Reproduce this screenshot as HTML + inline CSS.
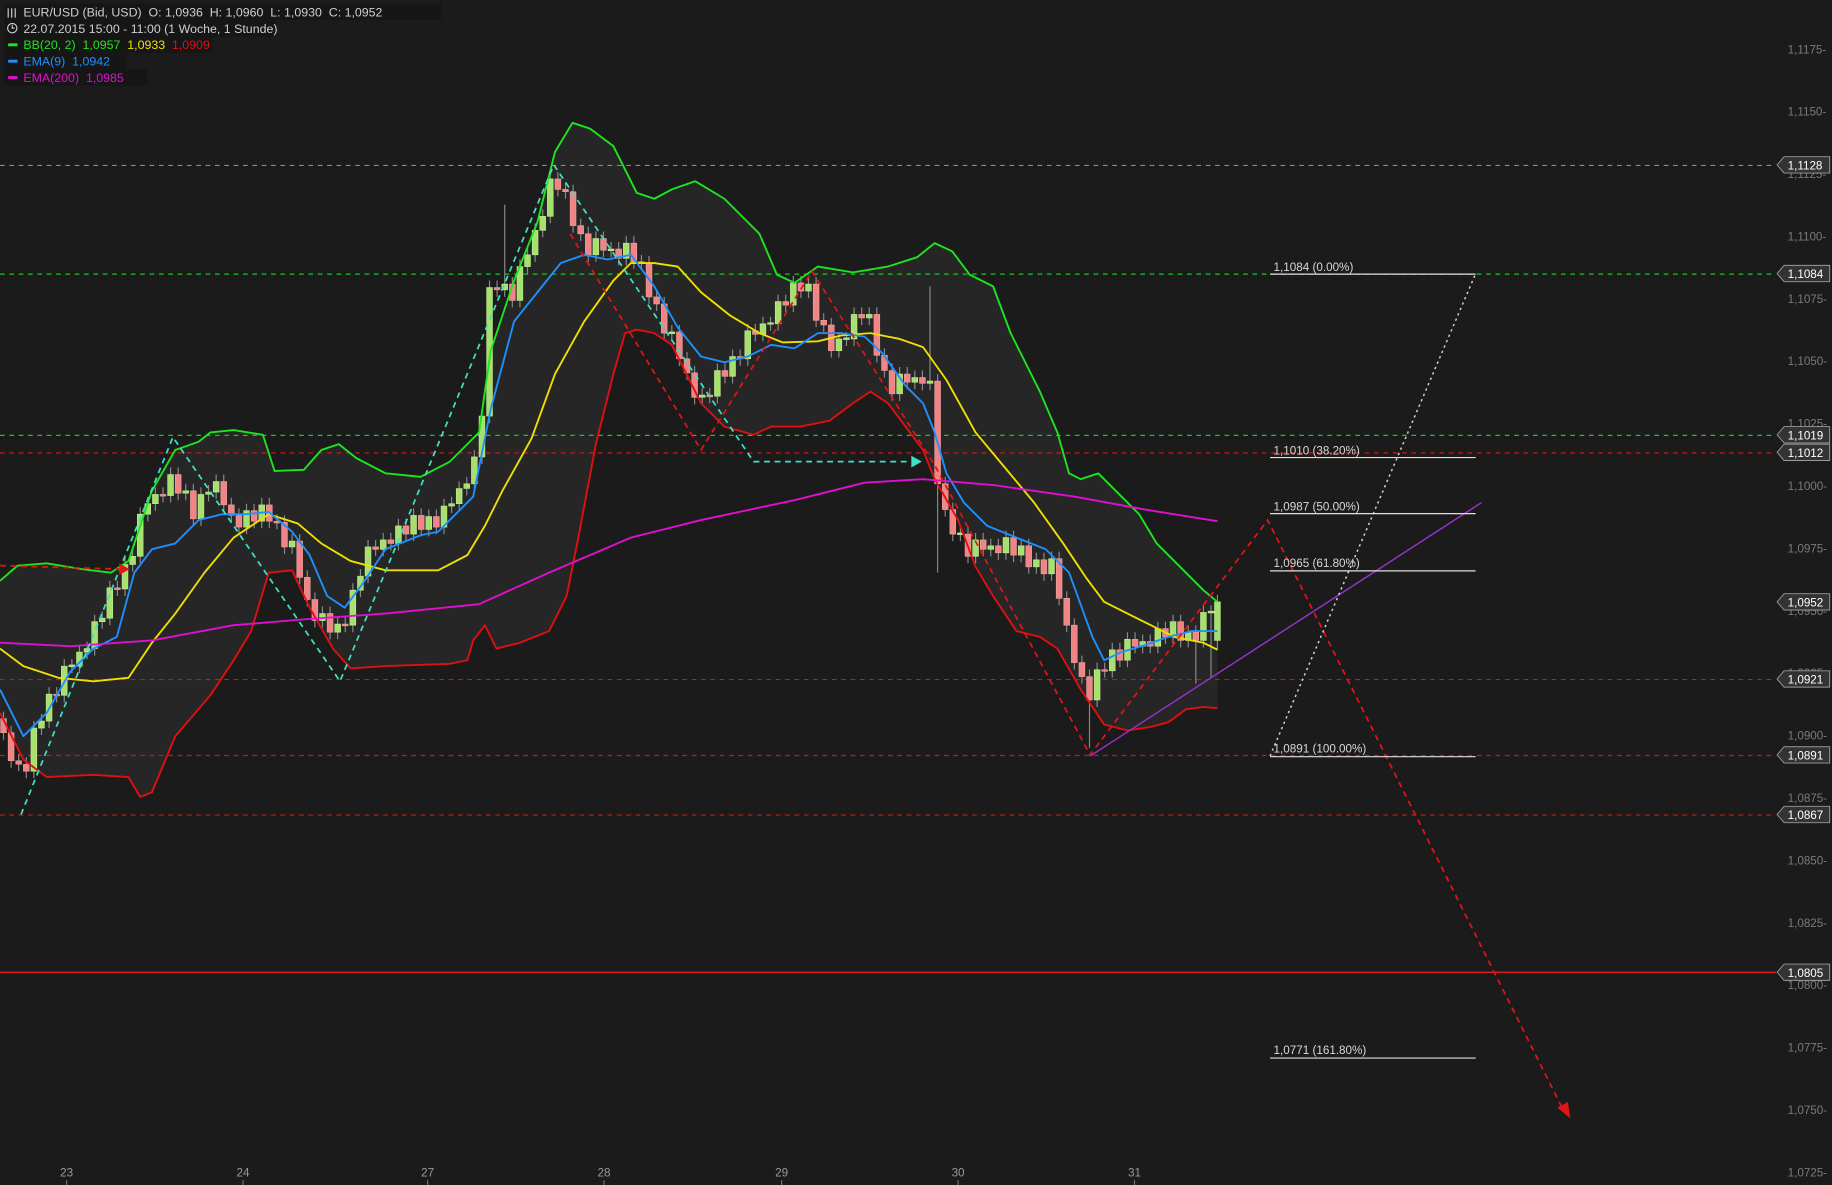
<!DOCTYPE html>
<html><head><meta charset="utf-8">
<style>
html,body{margin:0;padding:0;background:#1c1b1b;overflow:hidden}
svg{display:block}
text{font-family:"Liberation Sans",sans-serif;white-space:pre}
</style></head>
<body>
<svg width="1832" height="1185" viewBox="0 0 1568 1014" xmlns="http://www.w3.org/2000/svg">
<rect width="1568" height="1014" fill="#1c1b1b"/>
<polygon fill="#262626" points="0,497 15,484 40,482 70,487 95,490 110,480 130,420 150,385 170,378 180,370 200,368 225,372 235,403 260,402 275,385 290,380 305,392 330,405 360,408 385,395 410,370 420,300 440,240 460,190 475,130 490,105 505,110 525,125 545,165 560,170 575,162 595,155 620,170 650,200 665,235 680,242 700,228 730,233 760,228 785,220 800,208 815,215 830,235 850,245 865,285 890,335 905,370 915,405 925,410 940,405 960,425 975,440 990,465 1010,485 1030,505 1042,515 1042,606 1030,605 1015,607 1000,618 985,622 965,625 945,620 925,590 905,555 890,545 870,540 850,510 835,485 820,445 800,410 790,385 775,365 760,345 745,335 730,345 710,360 685,365 660,365 645,372 620,365 600,345 575,295 560,285 545,282 535,285 525,320 510,380 495,460 485,510 470,540 445,550 425,555 415,535 405,548 400,565 385,568 330,570 300,572 285,555 265,520 250,488 230,490 215,540 200,565 180,595 150,630 130,678 120,682 110,665 80,663 40,665 20,650 0,610"/>
<g stroke-width="1" fill="none">
<line x1="0" y1="141.5" x2="1520" y2="141.5" stroke="#8a8a8a" stroke-dasharray="4,4"/>
<line x1="0" y1="234.5" x2="1520" y2="234.5" stroke="#19c819" stroke-dasharray="4,4"/>
<line x1="0" y1="372.5" x2="1520" y2="372.5" stroke="#19c819" stroke-dasharray="4,4"/>
<line x1="0" y1="387.5" x2="1520" y2="387.5" stroke="#c81919" stroke-dasharray="4,4"/>
<line x1="0" y1="581.5" x2="1520" y2="581.5" stroke="#c81919" stroke-dasharray="4,4"/>
<line x1="0" y1="646.5" x2="1520" y2="646.5" stroke="#c81919" stroke-dasharray="4,4"/>
<line x1="0" y1="697.5" x2="1520" y2="697.5" stroke="#c81919" stroke-dasharray="4,4"/>
<line x1="0" y1="832" x2="1520" y2="832" stroke="#e01515" stroke-width="1.3"/>
</g>
<!-- wicks -->
<path stroke="#8a8a8a" stroke-width="1" fill="none" d="M3 609V633M9.5 621V657M16 645V660M22.5 648V666M29 617V666M35.5 611V629M42 588V623M48.5 588V601M55 564V601M61.5 564V576M68 552V576M74.5 549V564M81 526V561M87.5 523V538M94 497V535M100.5 497V510M107 477V510M113.5 470V489M120 434V482M126.5 425V446M133 417V437M139.5 417V430M146 400V430M152.5 400V428M159 414V428M165.5 414V450M172 417V450M178.5 415V429M185 406V427M191.5 406V438M198 426V447M204.5 435V457M211 431V457M217.5 431V452M224 426V452M230.5 426V452M237 440V453M243.5 441V474M250 457V474M256.5 457V500M263 488V519M269.5 507V537M276 519V537M282.5 519V547M289 528V547M295.5 528V541M302 499V541M308.5 487V511M315 462V499M321.5 462V476M328 456V476M334.5 456V471M341 444V471M347.5 444V463M354 435V463M360.5 435V459M367 436V459M373.5 436V457M380 427V457M386.5 425V439M393 412V437M399.5 408V424M406 385V420M412.5 350V397M419 240V362M425.5 240V254M432 175V254M438.5 237V263M445 222V263M451.5 212V234M458 191V224M464.5 179V203M471 147V191M477.5 147V168M484 156V170M490.5 158V199M497 187V206M503.5 194V224M510 198V224M516.5 198V220M523 207V220M529.5 207V227M536 202V227M542.5 202V230M549 218V231M555.5 219V260M562 248V266M568.5 254V291M575 278V291M581.5 278V313M588 301V325M594.5 313V346M601 332V346M607.5 332V345M614 311V345M620.5 311V328M627 299V328M633.5 299V313M640 277V313M646.5 277V292M653 271V292M659.5 271V283M666 252V283M672.5 252V267M679 236V267M685.5 236V255M692 237V255M698.5 237V280M705 268V284M711.5 272V306M718 284V306M724.5 284V296M731 263V296M737.5 263V278M744 263V278M750.5 263V310M757 298V323M763.5 311V343M770 314V343M776.5 314V333M783 317V333M789.5 317V334M796 245V334M802.5 320V490M809 408V442M815.5 430V463M822 451V463M828.5 451V482M835 456V482M841.5 456V476M848 461V476M854.5 461V479M861 454V479M867.5 454V481M874 461V481M880.5 461V491M887 473V491M893.5 473V497M900 472V497M906.5 472V518M913 506V541M919.5 529V573M926 561V585M932.5 573V640M939 567V605M945.5 567V580M952 550V580M958.5 550V571M965 541V571M971.5 541V559M978 543V559M984.5 543V559M991 532V559M997.5 532V551M1004 526V551M1010.5 526V554M1017 535V554M1023.5 535V585M1030 518V554M1036.5 518V580M1042 509V556"/>
<!-- bear bodies -->
<path fill="#f08585" stroke="#f4a0a0" stroke-width="0.5" d="M0.5 615h5v12h-5zM7 627h5v24h-5zM13.5 651h5v3h-5zM20 654h5v6h-5zM46 594h5v1.5h-5zM98 503h5v1.5h-5zM137 423h5v1.5h-5zM150 406h5v16h-5zM163 420h5v24h-5zM189 412h5v20h-5zM195.5 432h5v9h-5zM202 441h5v10h-5zM215 437h5v9h-5zM228 432h5v14h-5zM234.5 446h5v1.5h-5zM241 447h5v21h-5zM254 463h5v31h-5zM260.5 494h5v19h-5zM267 513h5v18h-5zM280 525h5v16h-5zM293 534h5v1.5h-5zM319 468h5v2h-5zM332 462h5v3h-5zM345 450h5v7h-5zM358 441h5v12h-5zM371 442h5v9h-5zM423 246h5v2h-5zM436 243h5v14h-5zM475 153h5v9h-5zM481.5 162h5v2h-5zM488 164h5v29h-5zM494.5 193h5v7h-5zM501 200h5v18h-5zM514 204h5v10h-5zM527 213h5v8h-5zM540 208h5v16h-5zM546.5 224h5v1.5h-5zM553 225h5v29h-5zM559.5 254h5v6h-5zM566 260h5v25h-5zM579 284h5v23h-5zM585.5 307h5v12h-5zM592 319h5v21h-5zM605 338h5v1.5h-5zM618 317h5v5h-5zM631 305h5v2h-5zM644 283h5v3h-5zM670 258h5v3h-5zM683 242h5v7h-5zM696 243h5v31h-5zM702.5 274h5v4h-5zM709 278h5v22h-5zM735 269h5v3h-5zM748 269h5v35h-5zM754.5 304h5v13h-5zM761 317h5v20h-5zM774 320h5v7h-5zM787 323h5v5h-5zM800 326h5v88h-5zM806.5 414h5v22h-5zM813 436h5v21h-5zM826 457h5v19h-5zM839 462h5v8h-5zM852 467h5v6h-5zM865 460h5v15h-5zM878 467h5v18h-5zM891 479h5v12h-5zM904 478h5v34h-5zM910.5 512h5v23h-5zM917 535h5v32h-5zM923.5 567h5v12h-5zM930 579h5v20h-5zM943 573h5v1.5h-5zM956 556h5v9h-5zM969 547h5v6h-5zM982 549h5v4h-5zM995 538h5v7h-5zM1008 532h5v16h-5zM1021 541h5v7h-5z"/>
<!-- bull bodies -->
<path fill="#a8e070" stroke="#c0f090" stroke-width="0.5" d="M26.5 623h5v37h-5zM33 617h5v6h-5zM39.5 594h5v23h-5zM52.5 570h5v25h-5zM59 569h5v1.5h-5zM65.5 558h5v12h-5zM72 555h5v3h-5zM78.5 532h5v23h-5zM85 529h5v3h-5zM91.5 503h5v26h-5zM104.5 483h5v21h-5zM111 476h5v7h-5zM117.5 440h5v36h-5zM124 431h5v9h-5zM130.5 423h5v8h-5zM143.5 406h5v18h-5zM156.5 420h5v2h-5zM169.5 423h5v21h-5zM176 421h5v2h-5zM182.5 412h5v9h-5zM208.5 437h5v14h-5zM221.5 432h5v14h-5zM247.5 463h5v5h-5zM273.5 525h5v6h-5zM286.5 534h5v7h-5zM299.5 505h5v30h-5zM306 493h5v12h-5zM312.5 468h5v25h-5zM325.5 462h5v8h-5zM338.5 450h5v15h-5zM351.5 441h5v16h-5zM364.5 442h5v11h-5zM377.5 433h5v18h-5zM384 431h5v2h-5zM390.5 418h5v13h-5zM397 414h5v4h-5zM403.5 391h5v23h-5zM410 356h5v35h-5zM416.5 246h5v110h-5zM429.5 243h5v5h-5zM442.5 228h5v29h-5zM449 218h5v10h-5zM455.5 197h5v21h-5zM462 185h5v12h-5zM468.5 153h5v32h-5zM507.5 204h5v14h-5zM520.5 213h5v1.5h-5zM533.5 208h5v13h-5zM572.5 284h5v1.5h-5zM598.5 338h5v2h-5zM611.5 317h5v22h-5zM624.5 305h5v17h-5zM637.5 283h5v24h-5zM650.5 277h5v9h-5zM657 276h5v1.5h-5zM663.5 258h5v19h-5zM676.5 242h5v19h-5zM689.5 243h5v6h-5zM715.5 290h5v10h-5zM722 289h5v1.5h-5zM728.5 269h5v21h-5zM741.5 269h5v3h-5zM767.5 320h5v17h-5zM780.5 323h5v4h-5zM793.5 326h5v2h-5zM819.5 456h5v1.5h-5zM832.5 462h5v14h-5zM845.5 467h5v3h-5zM858.5 460h5v13h-5zM871.5 467h5v8h-5zM884.5 479h5v6h-5zM897.5 478h5v13h-5zM936.5 573h5v26h-5zM949.5 556h5v18h-5zM962.5 547h5v18h-5zM975.5 549h5v4h-5zM988.5 538h5v15h-5zM1001.5 532h5v13h-5zM1014.5 541h5v7h-5zM1027.5 524h5v24h-5zM1034 523h5v1.5h-5zM1039.5 515h5v33h-5z"/>
<g fill="none" stroke-width="1.6" stroke-linejoin="round">
<polyline stroke="#1ee61e" points="0,497 15,484 40,482 70,487 95,490 110,480 130,420 150,385 170,378 180,370 200,368 225,372 235,403 260,402 275,385 290,380 305,392 330,405 360,408 385,395 410,370 420,300 440,240 460,190 475,130 490,105 505,110 525,125 545,165 560,170 575,162 595,155 620,170 650,200 665,235 680,242 700,228 730,233 760,228 785,220 800,208 815,215 830,235 850,245 865,285 890,335 905,370 915,405 925,410 940,405 960,425 975,440 990,465 1010,485 1030,505 1042,515"/>
<polyline stroke="#e01010" points="0,610 20,650 40,665 80,663 110,665 120,682 130,678 150,630 180,595 200,565 215,540 230,490 250,488 265,520 285,555 300,572 330,570 385,568 400,565 405,548 415,535 425,555 445,550 470,540 485,510 495,460 510,380 525,320 535,285 545,282 560,285 575,295 600,345 620,365 645,372 660,365 685,365 710,360 730,345 745,335 760,345 775,365 790,385 800,410 820,445 835,485 850,510 870,540 890,545 905,555 925,590 945,620 965,625 985,622 1000,618 1015,607 1030,605 1042,606"/>
<polyline stroke="#f0e000" points="0,555 20,570 50,580 80,583 110,580 130,550 150,525 175,490 200,460 230,440 255,448 275,465 300,480 330,488 375,488 400,475 415,450 430,420 455,375 475,320 500,275 525,240 540,225 560,225 580,228 600,250 625,270 650,285 670,293 700,292 720,287 745,285 770,290 790,297 810,325 835,370 860,400 885,430 910,465 930,495 945,515 965,525 985,535 1005,545 1030,550 1042,556"/>
<polyline stroke="#1e90ff" points="0,590 20,630 40,610 60,575 80,555 100,545 115,490 130,470 150,465 170,445 190,440 210,440 230,438 250,455 265,475 280,510 295,520 310,500 330,470 360,458 375,455 390,440 405,425 420,350 440,275 460,250 480,225 500,218 520,222 540,218 560,245 580,280 600,305 620,310 640,305 660,295 680,298 700,285 720,285 740,288 755,302 775,330 790,345 800,370 810,405 825,430 845,450 870,460 895,470 915,490 935,545 945,565 960,558 980,552 1000,545 1020,540 1042,540"/>
<polyline stroke="#e010d0" points="0,550 60,553 130,548 200,535 260,530 330,525 410,517 470,490 540,460 600,445 680,428 740,413 790,410 850,415 920,425 980,436 1042,446"/>
</g>
<g fill="none" stroke-width="1.5">
<polyline stroke="#40e0c0" stroke-dasharray="5,4" points="18,697 148,374 291,583 474,141 645,395 780,395"/>
<polygon points="780,390 789,395 780,400" fill="#40e0c0"/>
<polyline stroke="#e01515" stroke-dasharray="5,4" points="0,484 104,487"/>
<polygon points="102,482 111,487 102,492" fill="#e01515"/>
<polyline stroke="#e01515" stroke-dasharray="5,4" points="488,200 600,385 695,232 800,398 933,646 1085,445 1338,950"/>
<polygon points="1333,948 1344,957 1342,943" fill="#e01515"/>
<line x1="933" y1="647" x2="1268" y2="430" stroke="#9a30d0" stroke-width="1.2"/>
<line x1="1087" y1="647" x2="1263" y2="234" stroke="#cfcfcf" stroke-width="1.3" stroke-dasharray="2,3"/>
</g>
<g stroke="#e0e0e0" stroke-width="1">
<line x1="1087" y1="234.5" x2="1263" y2="234.5"/>
<line x1="1087" y1="391.5" x2="1263" y2="391.5"/>
<line x1="1087" y1="439.5" x2="1263" y2="439.5"/>
<line x1="1087" y1="488.5" x2="1263" y2="488.5"/>
<line x1="1087" y1="647.5" x2="1263" y2="647.5"/>
<line x1="1087" y1="905.5" x2="1263" y2="905.5"/>
</g>
<g fill="#d8d8d8" font-size="10">
<text x="1090" y="232">1,1084 (0.00%)</text>
<text x="1090" y="389">1,1010 (38.20%)</text>
<text x="1090" y="437">1,0987 (50.00%)</text>
<text x="1090" y="485">1,0965 (61.80%)</text>
<text x="1090" y="644">1,0891 (100.00%)</text>
<text x="1090" y="902">1,0771 (161.80%)</text>
</g>
<g fill="#7a7a7a" font-size="10">
<text x="1530" y="45.5">1,1175-</text>
<text x="1530" y="98.9">1,1150-</text>
<text x="1530" y="152.3">1,1125-</text>
<text x="1530" y="205.7">1,1100-</text>
<text x="1530" y="259.1">1,1075-</text>
<text x="1530" y="312.5">1,1050-</text>
<text x="1530" y="365.9">1,1025-</text>
<text x="1530" y="419.3">1,1000-</text>
<text x="1530" y="472.7">1,0975-</text>
<text x="1530" y="526.1">1,0950-</text>
<text x="1530" y="579.5">1,0925-</text>
<text x="1530" y="632.9">1,0900-</text>
<text x="1530" y="686.3">1,0875-</text>
<text x="1530" y="739.7">1,0850-</text>
<text x="1530" y="793.1">1,0825-</text>
<text x="1530" y="846.5">1,0800-</text>
<text x="1530" y="899.9">1,0775-</text>
<text x="1530" y="953.3">1,0750-</text>
<text x="1530" y="1006.7">1,0725-</text>
</g>
<g fill="#333" stroke="#9a9a9a" stroke-width="0.8">
<path d="M1521 141L1527 134H1566V148H1527Z"/>
<path d="M1521 234L1527 227H1566V241H1527Z"/>
<path d="M1521 372L1527 365H1566V379H1527Z"/>
<path d="M1521 387L1527 380H1566V394H1527Z"/>
<path d="M1521 515L1527 508H1566V522H1527Z"/>
<path d="M1521 581L1527 574H1566V588H1527Z"/>
<path d="M1521 646L1527 639H1566V653H1527Z"/>
<path d="M1521 697L1527 690H1566V704H1527Z"/>
<path d="M1521 832L1527 825H1566V839H1527Z"/>
</g>
<g fill="#fff" font-size="10">
<text x="1530" y="145">1,1128</text>
<text x="1530" y="238">1,1084</text>
<text x="1530" y="376">1,1019</text>
<text x="1530" y="391">1,1012</text>
<text x="1530" y="519">1,0952</text>
<text x="1530" y="585">1,0921</text>
<text x="1530" y="650">1,0891</text>
<text x="1530" y="701">1,0867</text>
<text x="1530" y="836">1,0805</text>
</g>
<g fill="#9a9a9a" font-size="10" text-anchor="middle">
<text x="57" y="1007">23</text><text x="208" y="1007">24</text><text x="366" y="1007">27</text><text x="517" y="1007">28</text><text x="669" y="1007">29</text><text x="820" y="1007">30</text><text x="971" y="1007">31</text>
</g>
<g stroke="#777"><line x1="57" y1="1010" x2="57" y2="1014"/><line x1="208" y1="1010" x2="208" y2="1014"/><line x1="366" y1="1010" x2="366" y2="1014"/><line x1="517" y1="1010" x2="517" y2="1014"/><line x1="669" y1="1010" x2="669" y2="1014"/><line x1="820" y1="1010" x2="820" y2="1014"/><line x1="971" y1="1010" x2="971" y2="1014"/></g>
<g font-size="10.6">
<rect x="4" y="3" width="374" height="14" fill="#161616"/>
<rect x="4" y="17" width="232" height="14" fill="#161616"/>
<rect x="4" y="31" width="178" height="14" fill="#161616"/>
<rect x="4" y="45" width="104" height="14" fill="#161616"/>
<rect x="4" y="59" width="122" height="14" fill="#161616"/>
<g stroke="#cfcfcf" stroke-width="1"><line x1="7" y1="7" x2="7" y2="15"/><line x1="10" y1="7" x2="10" y2="15"/><line x1="13" y1="7" x2="13" y2="15"/></g>
<circle cx="10.5" cy="24" r="4" fill="none" stroke="#cfcfcf"/><path d="M10.5 21.5V24H12.5" stroke="#cfcfcf" fill="none"/>
<text x="20" y="14" fill="#cfcfcf">EUR/USD (Bid, USD)  O: 1,0936  H: 1,0960  L: 1,0930  C: 1,0952</text>
<text x="20" y="28" fill="#cfcfcf">22.07.2015 15:00 - 11:00 (1 Woche, 1 Stunde)</text>
<rect x="7" y="37" width="8" height="2.5" fill="#1ee61e"/>
<text x="20" y="42"><tspan fill="#1ee61e">BB(20, 2)  1,0957 </tspan><tspan fill="#f0e000"> 1,0933 </tspan><tspan fill="#e01010"> 1,0909</tspan></text>
<rect x="7" y="51" width="8" height="2.5" fill="#1e90ff"/>
<text x="20" y="56" fill="#1e90ff">EMA(9)  1,0942</text>
<rect x="7" y="65" width="8" height="2.5" fill="#e010d0"/>
<text x="20" y="70" fill="#e010d0">EMA(200)  1,0985</text>
</g>
</svg>
</body></html>
